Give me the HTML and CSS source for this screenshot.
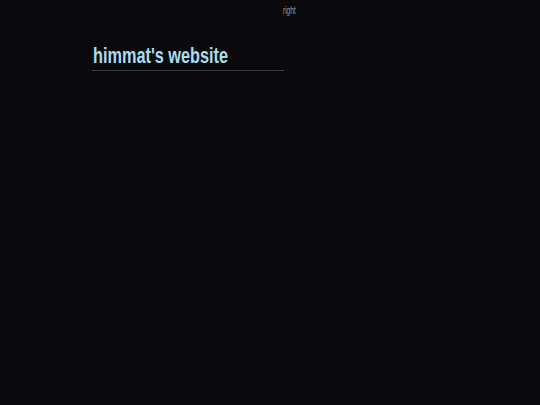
FILE: index.html
```html
<!DOCTYPE html>
<html>
<head>
<meta charset="utf-8">
<link rel="stylesheet" href="styles.css">
</head>
<body>
<div class="top"><span class="right">right</span></div>
<main class="content">
  <h1 class="title"><span class="narrow">himmat's website</span></h1>
</main>
</body>
</html>
```
FILE: styles.css
```css
html, body {
  margin: 0;
  padding: 0;
  background: #0a0a0c;
  height: 100%;
}
body {
  font-family: "Liberation Sans Narrow", "Liberation Sans", sans-serif;
}
.top {
  display: flex;
  padding: 5px 0 0 283px;
  height: 14px;
}
.right {
  display: inline-block;
  font-size: 10px;
  color: #9a9a9a;
  transform: scaleX(0.65);
  transform-origin: left center;
}
.content {
  padding: 24px 0 0 92px;
}
.title {
  margin: 0;
  width: 191px;
  font-size: 22px;
  font-weight: bold;
  color: #a9dcec;
  padding-bottom: 1px;
  border-bottom: 1px solid #3a3d42;
  padding-left: 1px;
  white-space: nowrap;
}
.narrow {
  display: inline-block;
  transform: scaleX(0.74);
  transform-origin: left center;
}
```
